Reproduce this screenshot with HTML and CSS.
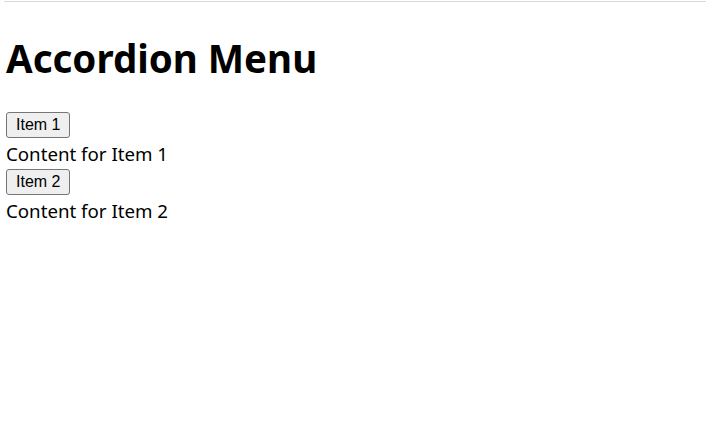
FILE: index.html
```html
<!DOCTYPE html>
<html lang="en">
<head>
<meta charset="utf-8">
<title>Accordion Menu</title>
<link rel="stylesheet" href="styles.css">
</head>
<body>
<div class="frame">
  <h1 class="title">Accordion Menu</h1>
  <div class="accordion">
    <div class="item">
      <button class="toggle" type="button">Item 1</button>
      <div class="content">Content for Item 1</div>
    </div>
    <div class="item">
      <button class="toggle" type="button">Item 2</button>
      <div class="content">Content for Item 2</div>
    </div>
  </div>
</div>
</body>
</html>
```
FILE: styles.css
```css
html, body {
  margin: 0;
  padding: 0;
  background: #ffffff;
}
body {
  padding-top: 1px;
  font-family: "Noto Sans", "Open Sans", sans-serif;
  color: #000000;
}
.frame {
  margin-left: 4px;
  border-top: 1px solid #d9d9d9;
  padding-left: 2px;
  min-height: 420px;
}
.title {
  margin: 32px 0 30px 0;
  font-size: 38.5px;
  line-height: 48px;
  font-weight: 700;
}
.accordion {
  display: flex;
  flex-direction: column;
}
.item {
  display: flex;
  flex-direction: column;
  align-items: flex-start;
}
.toggle {
  font-family: "Liberation Sans", Arial, sans-serif;
  font-size: 16px;
  line-height: 18px;
  padding: 3px 9px;
  border: 1px solid #767676;
  border-radius: 3px;
  background: #efefef;
  color: #000000;
  margin: 0;
}
.content {
  font-size: 18.7px;
  line-height: 31px;
}
```
